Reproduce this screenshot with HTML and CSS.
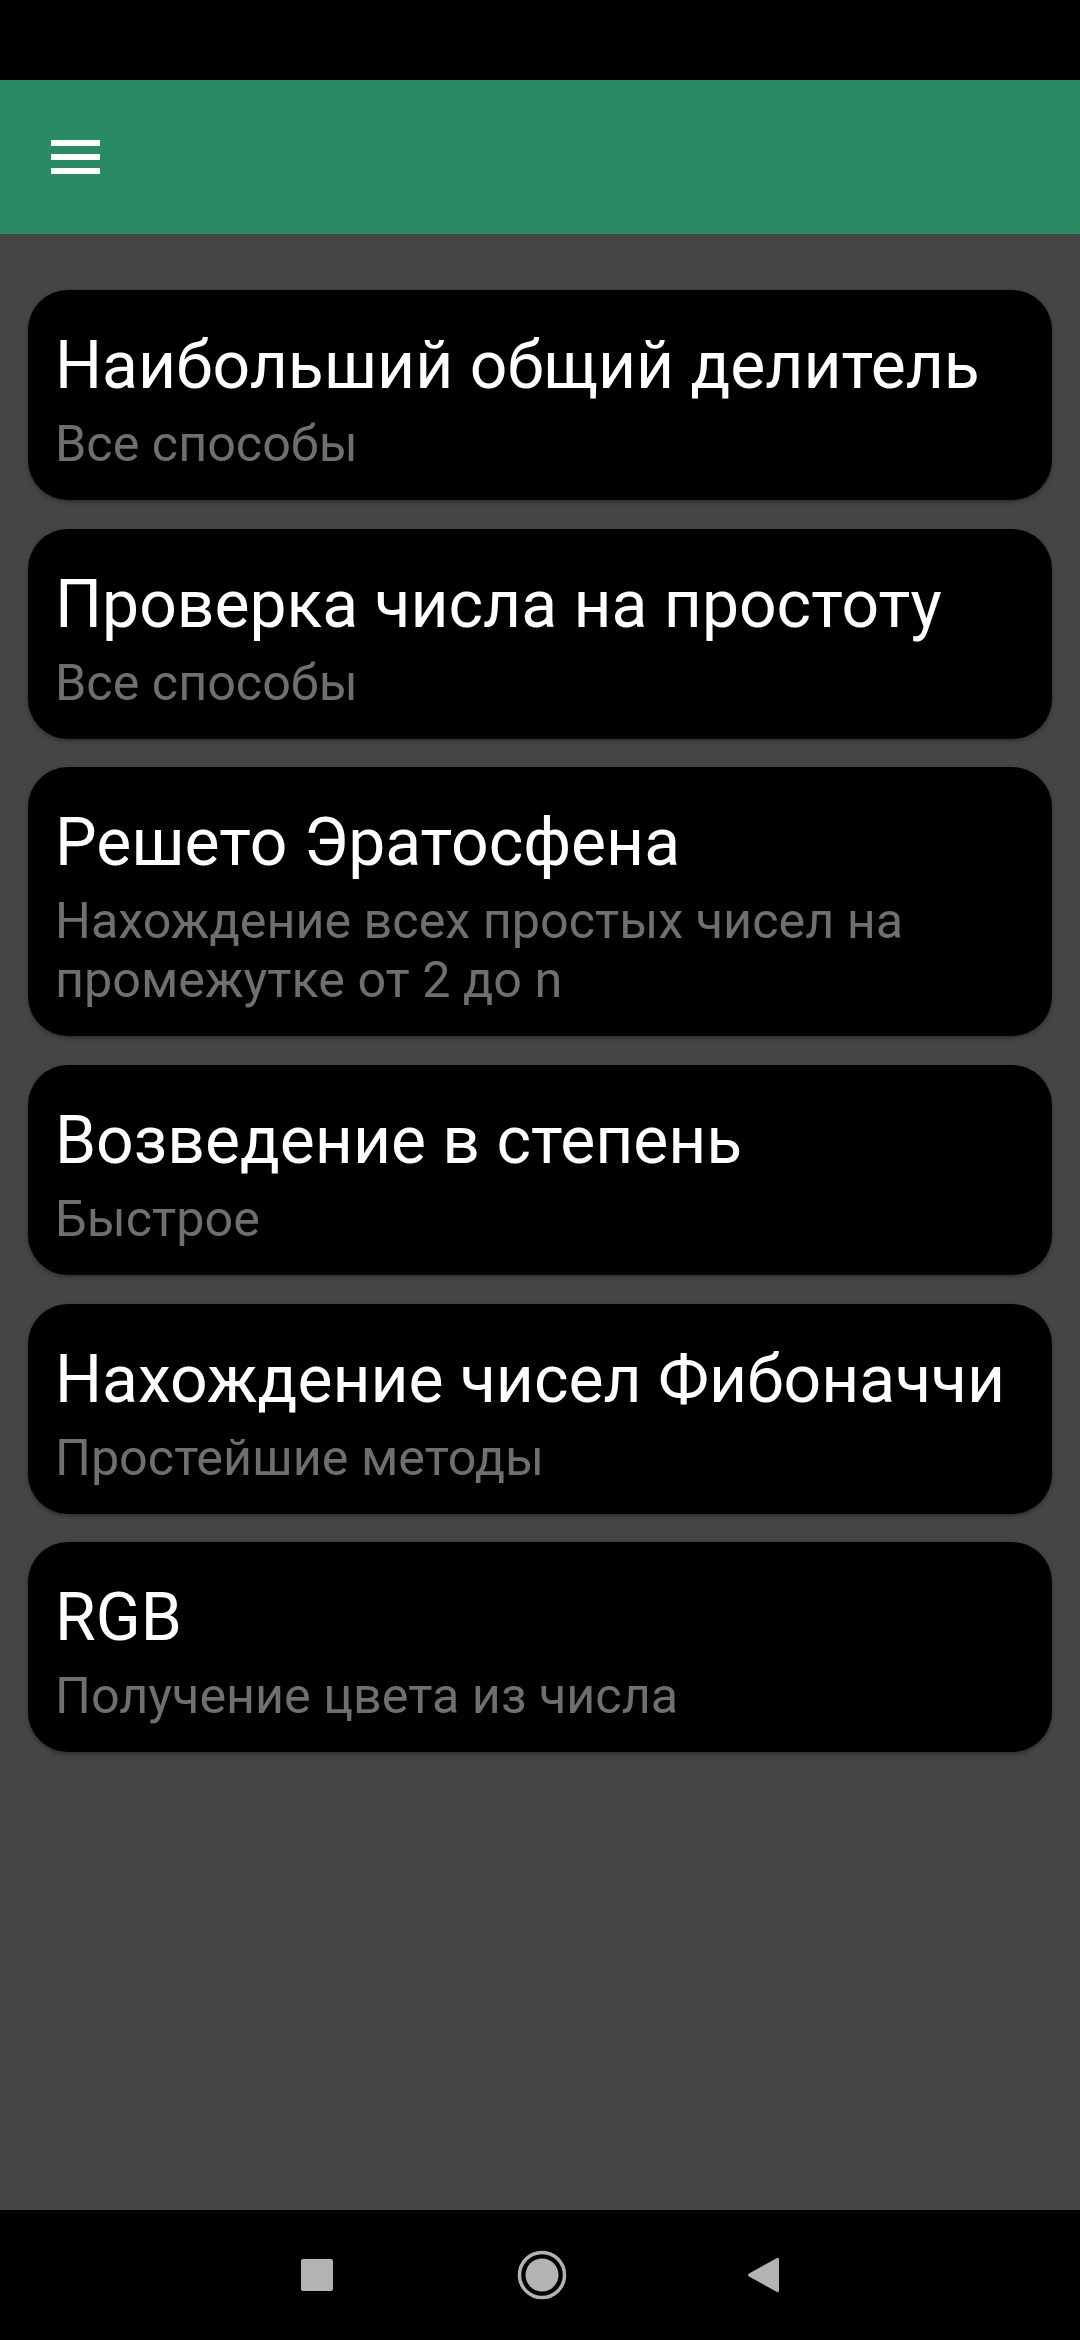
FILE: index.html
```html
<!DOCTYPE html>
<html lang="ru">
<head>
<meta charset="utf-8">
<title>Алгоритмы</title>
<link rel="stylesheet" href="styles.css">
</head>
<body>
<div class="app">
  <div class="status-bar"></div>
  <header class="toolbar">
    <button class="menu-btn" aria-label="Меню">
      <span class="bar"></span><span class="bar"></span><span class="bar"></span>
    </button>
  </header>
  <main class="list">
    <div class="card">
      <div class="title">Наибольший общий делитель</div>
      <div class="sub">Все способы</div>
    </div>
    <div class="card">
      <div class="title">Проверка числа на простоту</div>
      <div class="sub">Все способы</div>
    </div>
    <div class="card">
      <div class="title">Решето Эратосфена</div>
      <div class="sub">Нахождение всех простых чисел на промежутке от 2 до n</div>
    </div>
    <div class="card">
      <div class="title">Возведение в степень</div>
      <div class="sub">Быстрое</div>
    </div>
    <div class="card">
      <div class="title">Нахождение чисел Фибоначчи</div>
      <div class="sub">Простейшие методы</div>
    </div>
    <div class="card">
      <div class="title">RGB</div>
      <div class="sub">Получение цвета из числа</div>
    </div>
  </main>
  <nav class="nav-bar">
    <svg class="nav-icon nav-recents" width="32" height="32" viewBox="0 0 32 32"><rect x="0" y="0" width="32" height="32" rx="2" fill="#b3b3b3"/></svg>
    <svg class="nav-icon nav-home" width="50" height="50" viewBox="0 0 50 50"><circle cx="25" cy="25" r="22.5" fill="none" stroke="#b3b3b3" stroke-width="3.5"/><circle cx="25" cy="25" r="16.5" fill="#b3b3b3"/></svg>
    <svg class="nav-icon nav-back" width="32" height="38" viewBox="0 0 32 38"><path d="M30 2 Q32 1 32 4 L32 34 Q32 37 30 36 L2 20.5 Q0 19 2 17.5 Z" fill="#b3b3b3"/></svg>
  </nav>
</div>
</body>
</html>
```

FILE: styles.css
```css
html, body {
  margin: 0;
  padding: 0;
  background: #000;
}
body {
  font-family: Roboto, "Noto Sans", "Liberation Sans", sans-serif;
}
.app {
  width: 1080px;
  height: 2340px;
  display: flex;
  flex-direction: column;
  background: #454545;
}
.status-bar {
  height: 80px;
  background: #000;
  flex: none;
}
.toolbar {
  height: 154px;
  flex: none;
  background: #2a8a63;
  display: flex;
  align-items: center;
  padding-left: 51px;
}
.menu-btn {
  background: none;
  border: 0;
  padding: 0;
  width: 49px;
  height: 34px;
  display: flex;
  flex-direction: column;
  justify-content: space-between;
}
.menu-btn .bar {
  display: block;
  width: 49px;
  height: 6px;
  background: #fff;
}
.list {
  flex: 1;
  padding: 56px 28px 0;
  display: flex;
  flex-direction: column;
  gap: 28.7px;
}
.card {
  box-sizing: border-box;
  min-height: 210px;
  background: #000;
  border-radius: 40px;
  padding: 37px 27px 27px;
  box-shadow: 0 2px 4px rgba(0, 0, 0, 0.35);
}
.title {
  color: #fff;
  font-size: 66px;
  line-height: 77px;
  white-space: nowrap;
}
.sub {
  color: #6f6f6f;
  font-size: 50.3px;
  line-height: 59px;
  margin-top: 10px;
}
.nav-bar {
  height: 130px;
  flex: none;
  background: #000;
  display: flex;
  align-items: center;
  justify-content: center;
}
.nav-icon {
  display: block;
}
.nav-recents { margin-right: 184px; }
.nav-back { margin-left: 180px; }
```
